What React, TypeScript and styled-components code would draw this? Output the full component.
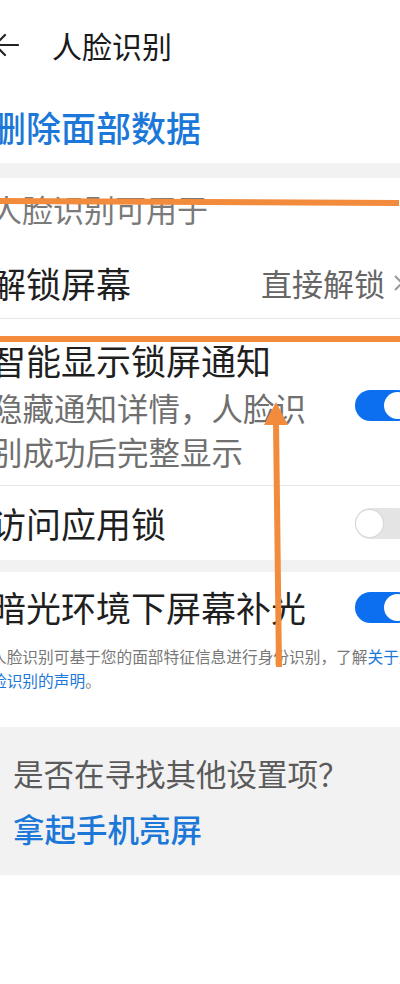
import styled, { createGlobalStyle } from "styled-components";

const blue = "#1c78d8";
const toggleBlue = "#0b6ff0";
const orange = "#f28b3b";
const band = "#f2f2f2";

const GlobalStyle = createGlobalStyle`
  html, body {
    margin: 0;
    padding: 0;
    background: #fff;
    overflow: hidden;
  }
  body {
    font-family: "Noto Sans CJK SC", "Noto Sans", sans-serif;
  }
`;

export default function App() {
  return (
    <Page>
      <GlobalStyle />
      <Screen>
        <Header>
          <BackIcon width="28" height="28" viewBox="0 0 28 28">
            <path d="M4 14 H27 M4 14 L14 4 M4 14 L14 24" fill="none" stroke="#222" strokeWidth="2.2" strokeLinecap="round" strokeLinejoin="round" />
          </BackIcon>
          <Title>人脸识别</Title>
        </Header>

        <ActionRow>删除面部数据</ActionRow>

        <Band $h={15} />

        <SectionHeader>人脸识别可用于</SectionHeader>

        <Row $h={70}>
          <RowTitle>解锁屏幕</RowTitle>
          <Value>直接解锁</Value>
          <Chevron width="12" height="20" viewBox="0 0 12 20">
            <path d="M2 3 L9 10 L2 17" fill="none" stroke="#999" strokeWidth="2" />
          </Chevron>
        </Row>
        <Divider />

        <Row $pad="19px 18px 12px 24px">
          <TextCol>
            <RowTitle>智能显示锁屏通知</RowTitle>
            <Sub>隐藏通知详情，人脸识别成功后完整显示</Sub>
          </TextCol>
          <Toggle $on />
        </Row>
        <Divider />

        <Row $h={74}>
          <RowTitle>访问应用锁</RowTitle>
          <Toggle />
        </Row>

        <Band $h={12} />

        <Row $h={70}>
          <RowTitle>暗光环境下屏幕补光</RowTitle>
          <Toggle $on />
        </Row>

        <Footnote>
          人脸识别可基于您的面部特征信息进行身份识别，了解<Link>关于人脸识别的声明</Link>。
        </Footnote>

        <HelpBox>
          <HelpText>是否在寻找其他设置项？</HelpText>
          <HelpLink>拿起手机亮屏</HelpLink>
        </HelpBox>
      </Screen>

      {/* orange annotation drawn over the screenshot */}
      <Marks width="400" height="984" viewBox="0 0 400 984">
        <line x1="0" y1="201" x2="399" y2="203" stroke={orange} strokeWidth="6" />
        <line x1="0" y1="339" x2="400" y2="339" stroke={orange} strokeWidth="6" />
        <line x1="279" y1="667" x2="276" y2="420" stroke={orange} strokeWidth="6" />
        <polygon points="276,402 264,425 288,425" fill={orange} />
      </Marks>
    </Page>
  );
}

const Page = styled.div`
  position: relative;
  width: 400px;
  height: 984px;
  overflow: hidden;
  background: #fff;
`;

const Screen = styled.div`
  width: 464px;
  margin-left: -33px;
  display: flex;
  flex-direction: column;
  color: #1f1f1f;
`;

const Header = styled.div`
  height: 90px;
  display: flex;
  align-items: center;
  padding-left: 24px;
`;

const BackIcon = styled.svg`
  flex: none;
`;

const Title = styled.div`
  margin-left: 33px;
  font-size: 30px;
  line-height: 40px;
  color: #1a1a1a;
`;

const ActionRow = styled.div`
  height: 73px;
  display: flex;
  align-items: center;
  padding-left: 24px;
  font-size: 35px;
  font-weight: 500;
  color: ${blue};
`;

const Band = styled.div<{ $h: number }>`
  height: ${({ $h }) => $h}px;
  background: ${band};
`;

const SectionHeader = styled.div`
  height: 70px;
  box-sizing: border-box;
  padding: 14px 0 0 24px;
  font-size: 31px;
  line-height: 34px;
  color: #7a7a7a;
`;

const Row = styled.div<{ $h?: number; $pad?: string }>`
  ${({ $h }) => ($h ? `height: ${$h}px;` : "")}
  box-sizing: border-box;
  padding: ${({ $pad }) => $pad ?? "0 18px 0 24px"};
  display: flex;
  align-items: center;
`;

const TextCol = styled.div`
  width: 325px;
  display: flex;
  flex-direction: column;
`;

const RowTitle = styled.div`
  font-size: 35px;
  line-height: 44px;
  color: #1f1f1f;
  white-space: nowrap;
`;

const Sub = styled.div`
  margin-top: 3px;
  font-size: 31.5px;
  line-height: 44px;
  color: #6f6f6f;
`;

const Value = styled.div`
  margin-left: auto;
  font-size: 31px;
  line-height: 40px;
  color: #666;
`;

const Chevron = styled.svg`
  margin: 0 8px 0 8px;
  flex: none;
`;

const Divider = styled.div`
  height: 1px;
  background: #e8e8e8;
`;

const Toggle = styled.div<{ $on?: boolean }>`
  margin-left: auto;
  flex: none;
  position: relative;
  width: 58px;
  height: 31px;
  border-radius: 16px;
  box-sizing: border-box;
  background: ${({ $on }) => ($on ? toggleBlue : "#e4e4e4")};

  &::after {
    content: "";
    position: absolute;
    top: 2px;
    left: ${({ $on }) => ($on ? "29px" : "1px")};
    width: 27px;
    height: 27px;
    border-radius: 50%;
    background: #fff;
    box-shadow: ${({ $on }) => ($on ? "none" : "0 0 0 1px #d6d6d6")};
  }
`;

const Footnote = styled.div`
  padding: 3px 8px 0 24px;
  height: 85px;
  box-sizing: border-box;
  font-size: 15.7px;
  line-height: 24px;
  color: #777;
`;

const Link = styled.span`
  color: ${blue};
`;

const HelpBox = styled.div`
  background: ${band};
  padding: 24px 0 25px 46px;
  display: flex;
  flex-direction: column;
`;

const HelpText = styled.div`
  font-size: 30.5px;
  line-height: 44px;
  color: #5a5a5a;
`;

const HelpLink = styled.div`
  margin-top: 11px;
  font-size: 31.5px;
  line-height: 44px;
  font-weight: 500;
  color: ${blue};
`;

const Marks = styled.svg`
  position: absolute;
  top: 0;
  left: 0;
  pointer-events: none;
`;
